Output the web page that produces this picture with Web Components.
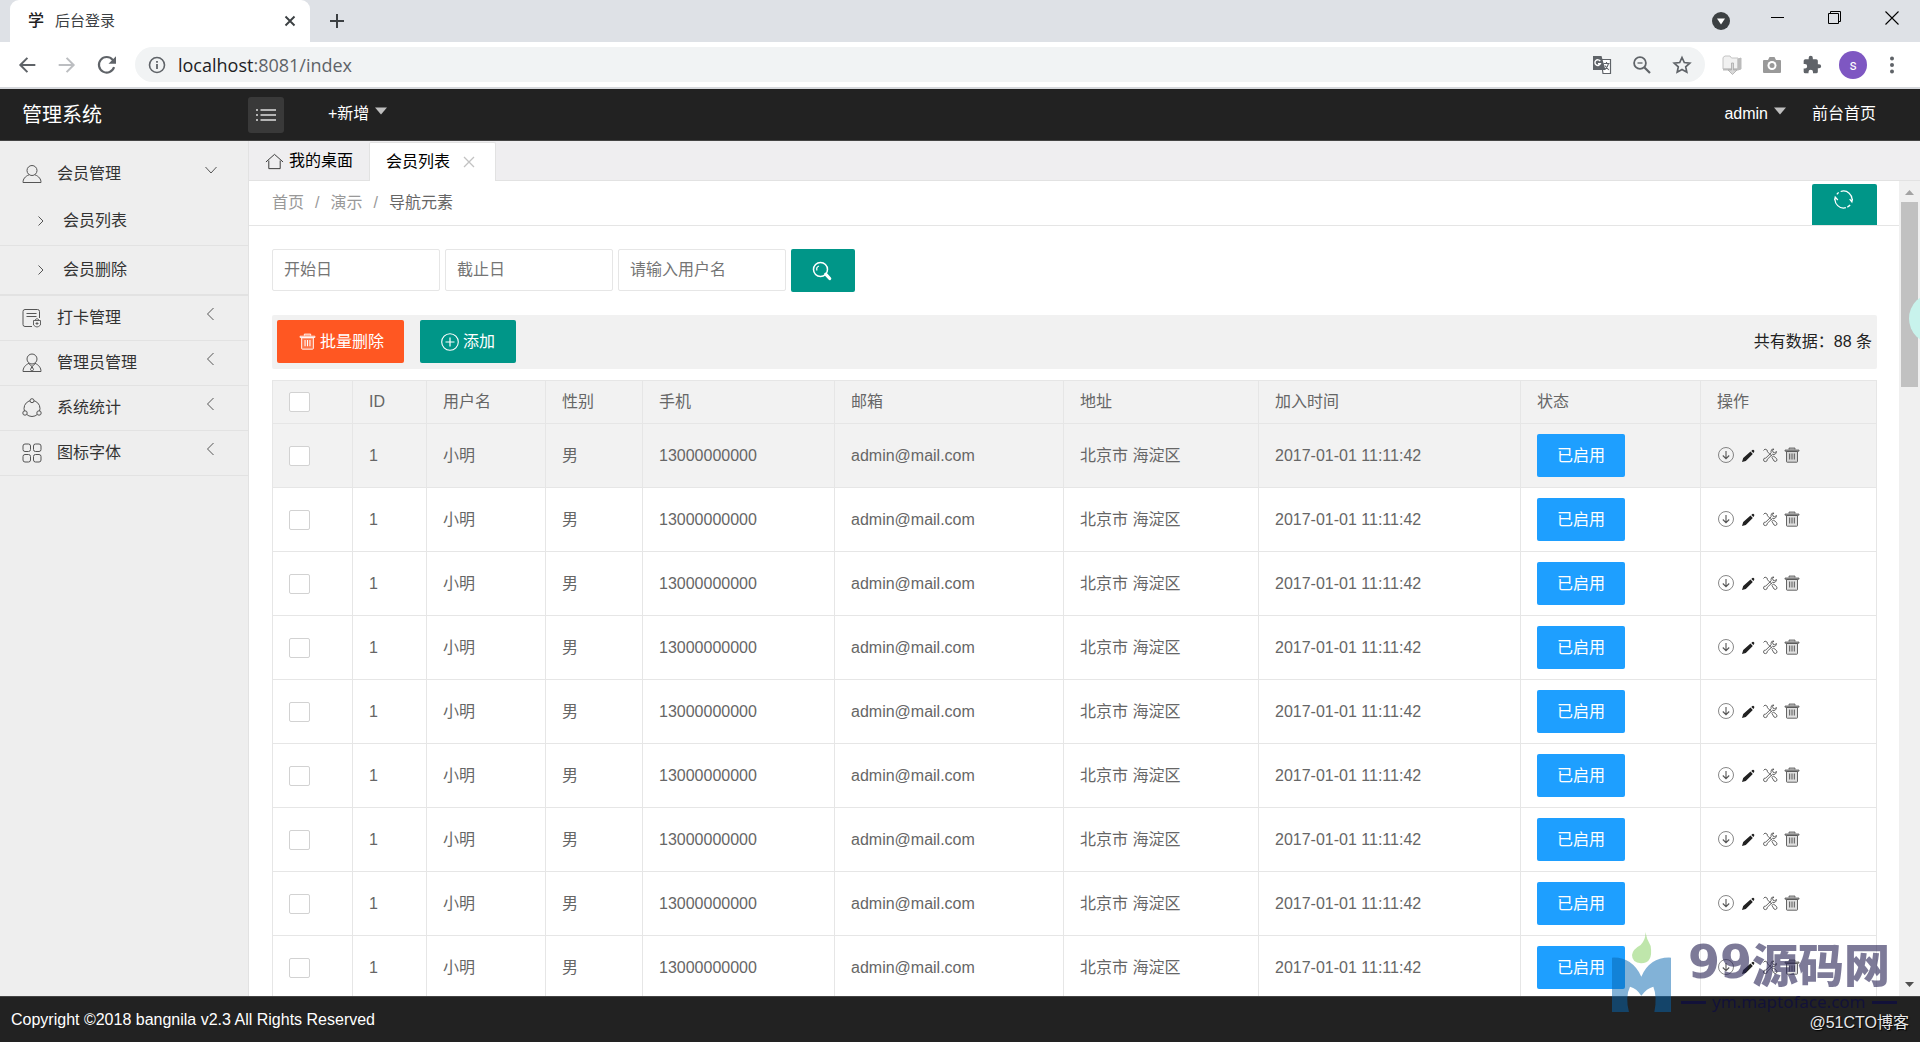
<!DOCTYPE html>
<html lang="zh-CN">
<head>
<meta charset="utf-8">
<title>后台登录</title>
<style>
  html, body { margin: 0; height: 100%; }
  body {
    font: 16px/24px "Liberation Sans", "Noto Sans CJK SC", sans-serif;
    color: #333; background: #fff; overflow: hidden;
  }
</style>
</head>
<body>
<admin-app></admin-app>

<script>
const ICONS = {
  back: ['0 0 24 24', '<path d="M22 12H4M12.500 3.500L4 12l8.500 8.500" stroke-width="2.400"/>'],
  forward: ['0 0 24 24', '<path d="M2 12h18M11.500 3.500L20 12l-8.500 8.500" stroke-width="2.400"/>'],
  reload: ['0 0 24 24', '<path d="M20.500 14.500A9.300 9.300 0 1 1 18.800 5.800L21 8" stroke-width="2.600"/><path d="M22.800 1.500v9h-9z" fill="currentColor" stroke="none"/>'],
  info: ['0 0 18 18', '<circle cx="9" cy="9" r="7.500" stroke-width="1.600"/><path d="M9 8v5M9 5v1.800" stroke-width="1.800"/>'],
  close: ['0 0 12 12', '<path d="M1.500 1.500l9 9M10.500 1.500l-9 9" stroke-width="1.900"/>'],
  plus: ['0 0 16 16', '<path d="M8 1v14M1 8h14" stroke-width="2"/>'],
  tabsearch: ['0 0 18 18', '<circle cx="9" cy="9" r="9" fill="currentColor" stroke="none"/><path d="M5 6.500h8L9 12.500z" fill="#fff" stroke="none"/>'],
  minimize: ['0 0 14 14', '<path d="M0 6.500h13" stroke-width="1"/>'],
  restore: ['0 0 14 14', '<path d="M.5 2.500h10v10H.5zM2.500 2.500v-2h10v10h-2" stroke-width="1"/>'],
  winclose: ['0 0 14 14', '<path d="M.5.5l13 13M13.500.5l-13 13" stroke-width="1.100"/>'],
  translate: ['0 0 20 20', '<path d="M9 4.500h9.500v14H11z" fill="#fff" stroke-width="1.200"/><path d="M1 1h8.500l4 14H1z" fill="currentColor" stroke="none"/><path d="M8.200 6.200A2.800 2.800 0 1 0 8.400 8.600H6" stroke="#fff" stroke-width="1.400"/><path d="M11.500 8.500h6M14.500 7v1.500M16.500 8.700c-.6 3-2 4.500-4 6M12.800 10.500l4 4.500" stroke-width="1.100"/>'],
  zoomout: ['0 0 18 18', '<circle cx="7" cy="7" r="5.900" stroke-width="1.800"/><path d="M11.500 11.500l5.500 5.500" stroke-width="2.200"/><path d="M4.500 7h5" stroke-width="1.300"/>'],
  star: ['0 0 20 20', '<path d="M10 2.500l2.300 5 5.500.6-4.100 3.700 1.100 5.400L10 14.500l-4.800 2.700 1.100-5.400L2.200 8.100l5.500-.6z" stroke-width="1.700"/>'],
  folder: ['0 0 20 20', '<path d="M1 2.500l2-1.500h5l1.500 2H16v11H1z" fill="#f1f1f1" stroke="#c4c4c4"/><path d="M16 4l3-1v11l-3 1z" fill="#bbb" stroke="#bbb"/><path d="M1 14.500h15" stroke="#bbb" stroke-width="2"/><path d="M9.500 8h2v7H15l-4.500 4.500L6 15h3.500z" fill="#d8d8d8" stroke="#aaa" stroke-width=".8"/>'],
  camera: ['0 0 18 18', '<path d="M1 4h4l1.500-3h5L13 4h4q1 0 1 1v11q0 1-1 1H1q-1 0-1-1V5q0-1 1-1z" fill="#999" stroke="none"/><circle cx="9" cy="9.500" r="4.500" fill="#fff" stroke="none"/><circle cx="9" cy="9.500" r="2.500" fill="#999" stroke="none"/>'],
  puzzle: ['0 0 24 24', '<path d="M20.500 11H19V7a2 2 0 0 0-2-2h-4V3.500a2.500 2.500 0 0 0-5 0V5H4a2 2 0 0 0-2 2v3.800h1.500a2.700 2.700 0 0 1 0 5.400H2V20a2 2 0 0 0 2 2h3.800v-1.500a2.700 2.700 0 0 1 5.400 0V22H17a2 2 0 0 0 2-2v-4h1.500a2.500 2.500 0 0 0 0-5z" fill="currentColor" stroke="none"/>'],
  dots: ['0 0 18 18', '<g fill="currentColor" stroke="none"><circle cx="9" cy="2.500" r="2"/><circle cx="9" cy="9" r="2"/><circle cx="9" cy="15.500" r="2"/></g>'],
  list: ['0 0 20 14', '<path d="M4.500 2H20M4.500 7H20M4.500 12H20M0 2h2M0 7h2M0 12h2" stroke-width="1.300"/>'],
  caret: ['0 0 12 7', '<path d="M0 0h12L6 7z" fill="currentColor" stroke="none"/>'],
  home: ['0 0 20 18', '<path d="M1 9.500L10 1.500l9 8M4 8v8.500h12V8"/>'],
  thinclose: ['0 0 12 12', '<path d="M1 1l10 10M11 1L1 11" stroke-width="1.300"/>'],
  user: ['0 0 20 20', '<circle cx="10" cy="6.500" r="5"/><path d="M7 10.800C3 12.500 1 15 1 18.500h18c0-3.500-2-6-6-7.700"/>'],
  admin: ['0 0 20 20', '<circle cx="10" cy="6" r="5"/><path d="M7 10.300C3 12 1 15 1 18.500h18c0-3.500-2-6.500-6-8.200M7 10.800l3 2.700 3-2.700M10 13.500l-1.500 3 1.500 2 1.500-2z"/>'],
  card: ['0 0 20 20', '<path d="M10 18.500H3q-2 0-2-2v-13q0-2 2-2h12.500q2 0 2 2V10M4.500 5.500h10M4.500 8.500h10"/><path d="M11.500 12.500h7v4.500q-2 2-3.500 2t-3.500-2zM13 12q2-3 4 0M15 14v3M13.500 15.500h3" stroke-width=".9"/>'],
  nodes: ['0 0 20 20', '<circle cx="10" cy="10.500" r="8"/><g fill="#eee"><circle cx="10" cy="2.700" r="2"/><circle cx="3" cy="15" r="2.200"/><circle cx="17" cy="15" r="2.200"/></g>'],
  grid: ['0 0 20 20', '<rect x="1" y="1" width="7.500" height="7.500" rx="2"/><rect x="11.500" y="1" width="7.500" height="7.500" rx="2"/><rect x="1" y="11.500" width="7.500" height="7.500" rx="2"/><rect x="11.500" y="11.500" width="7.500" height="7.500" rx="2"/>'],
  down: ['0 0 14 14', '<path d="M1.500 4L7 10l5.500-6"/>'],
  left: ['0 0 14 14', '<path d="M9.500 1L3.500 7l6 6"/>'],
  right: ['0 0 14 14', '<path d="M4.500 2.500L9 7l-4.500 4.500"/>'],
  refresh: ['0 0 20 20', '<path d="M7 1.600A9 9 0 0 1 18.800 12M16.500 9.500l2.300 3 .8-3.500M17 15.800A9 9 0 0 1 14 18M12.500 18.600A9 9 0 0 1 1.300 8M.5 11l.8-3.500 2.700 3M3 4.500a9 9 0 0 1 2-1.800" stroke-width="1.300"/>'],
  search: ['0 0 20 20', '<circle cx="8.500" cy="8.500" r="7" stroke-width="1.500"/><path d="M5 9.500a3.500 3.500 0 0 1 2-4.500" stroke-width="1.200"/><path d="M13.700 13.200l4 4.300" stroke-width="3.200" stroke-linecap="round"/>'],
  trash: ['0 0 16 16', '<path d="M1 3h14v1.200H1zM5 2.500V1h6v1.500" fill="currentColor" fill-opacity=".4" stroke-width=".8"/><path d="M2.500 4.500v10q0 .7.700.7h9.600q.7 0 .7-.7v-10z" fill="currentColor" fill-opacity=".18" stroke-width=".9"/><path d="M5.700 6.500v6M8 6.500v6M10.300 6.500v6" stroke-width="1"/>'],
  add: ['0 0 18 18', '<circle cx="9" cy="9" r="8.300" stroke-width="1.100"/><path d="M9 4.500v9M4.500 9h9" stroke-width="1.200"/>'],
  circledown: ['0 0 16 16', '<circle cx="8" cy="8" r="7.500" stroke-width=".7"/><path d="M8 4v7.500M4.800 8.500L8 11.700l3.200-3.200" stroke-width="1.100"/>'],
  pencil: ['0 0 16 16', '<path d="M2 15l1.200-4L10.500 4.600l2.300 2.300-7 7zM11.300 3.900l1-.9q1-.6 1.700.2t.1 1.800l-.7 1z" fill="#222" stroke="none"/>'],
  tools: ['0 0 16 16', '<path d="M1.500 3.500L3 2l2.200 1.200.3 1.600 4.500 4.500M10 10.500l1.500-1.500 3 2.500q1 1.500 0 2.500t-2.500 0z" stroke-width=".9"/><path d="M14.500 4.500L12.700 5.700 11 5.200l-.4-1.700L12 2Q9.200 1.600 9 4.200q0 1 .2 1.600L3.800 11Q1.500 10.800 1.500 13q.3 1.800 2 1.600 2-.2 1.800-2.300l5.200-5q3.500 1 4-2.800z" stroke-width=".9"/>'],
};

const make = (host, html) => { host.attachShadow({ mode: 'open' }).innerHTML = html; };

class UiIcon extends HTMLElement {
  connectedCallback() {
    if (this.shadowRoot) return;
    const [box, body] = ICONS[this.getAttribute('name')];
    make(this, `<style>
      :host { display: inline-flex; flex: none; width: var(--icon-size, 16px); height: var(--icon-size, 16px); }
      svg { width: 100%; height: 100%; display: block; }
    </style><svg viewBox="${box}" fill="none" stroke="currentColor" aria-hidden="true">${body}</svg>`);
    const size = this.getAttribute('size');
    if (size) this.style.setProperty('--icon-size', size + 'px');
  }
}

class BrowserBar extends HTMLElement {
  connectedCallback() {
    make(this, `<style>
      :host { display: block; flex: none; border-bottom: 2px solid #d6d8dc; color: #5f6368; background: #fff; }
      button { border: 0; padding: 0; background: none; color: inherit; font: inherit; display: inline-flex; align-items: center; justify-content: center; flex: none; }
      .strip { height: 42px; background: #dee1e6; display: flex; padding-left: 10px; color: #3c4043; }
      .tab { width: 300px; box-sizing: border-box; padding: 0 14px 0 18px; background: #fff; border-radius: 9px 9px 0 0; display: flex; align-items: center; gap: 11px; font-size: 15px; }
      .fav { font-weight: 500; font-size: 16px; color: #222; }
      .name { flex: 1; }
      .new { width: 54px; }
      .win { margin-left: auto; display: flex; color: #000; height: 36px; }
      .win button { width: 57px; }
      .win button:first-child { color: #3c4043; padding-top: 6px; }
      .bar { height: 45px; display: flex; align-items: center; box-sizing: border-box; padding: 0 9px 0 7px; }
      .nav { width: 40px; height: 35px; }
      .nav.off { color: #bcbec1; }
      .menu { width: 38px; }
      .url { flex: 1; height: 35px; margin: 0 7px 0 8px; padding: 0 3px 0 13px; background: #f1f3f4; border-radius: 18px; display: flex; align-items: center; }
      .address { flex: 1; padding-left: 12px; font: 18px/24px "Open Sans", "Noto Sans", sans-serif; }
      b { font-weight: 400; color: #202124; }
      .avatar { width: 28px; height: 28px; margin: 0 6px 0 7px; border-radius: 50%; background: #7e57c2; color: #fff; font: 14px/28px Roboto, sans-serif; }
    </style>
    <div class="strip">
      <div class="tab"><span class="fav">学</span><span class="name">后台登录</span><button aria-label="关闭标签页"><ui-icon name="close" size="12"></ui-icon></button></div>
      <button class="new" aria-label="新标签页"><ui-icon name="plus" size="16"></ui-icon></button>
      <div class="win">
        <button aria-label="搜索标签页"><ui-icon name="tabsearch" size="18"></ui-icon></button>
        <button aria-label="最小化"><ui-icon name="minimize" size="14"></ui-icon></button>
        <button aria-label="还原"><ui-icon name="restore" size="14"></ui-icon></button>
        <button aria-label="关闭"><ui-icon name="winclose" size="14"></ui-icon></button>
      </div>
    </div>
    <div class="bar">
      <button class="nav" aria-label="后退"><ui-icon name="back" size="20"></ui-icon></button>
      <button class="nav off" aria-label="前进"><ui-icon name="forward" size="20"></ui-icon></button>
      <button class="nav" aria-label="重新加载"><ui-icon name="reload" size="20"></ui-icon></button>
      <div class="url">
        <ui-icon name="info" size="18"></ui-icon>
        <span class="address"><b>localhost</b>:8081/index</span>
        <button class="nav" aria-label="翻译"><ui-icon name="translate" size="20"></ui-icon></button>
        <button class="nav" aria-label="缩放"><ui-icon name="zoomout" size="18"></ui-icon></button>
        <button class="nav" aria-label="收藏"><ui-icon name="star" size="20"></ui-icon></button>
      </div>
      <button class="nav" aria-label="下载"><ui-icon name="folder" size="20"></ui-icon></button>
      <button class="nav" aria-label="截图"><ui-icon name="camera" size="18"></ui-icon></button>
      <button class="nav" aria-label="扩展程序"><ui-icon name="puzzle" size="20"></ui-icon></button>
      <button class="avatar">s</button>
      <button class="nav menu" aria-label="菜单"><ui-icon name="dots" size="18"></ui-icon></button>
    </div>`);
  }
}

class AppHeader extends HTMLElement {
  connectedCallback() {
    make(this, `<style>
      :host { display: flex; flex: none; align-items: center; height: 51px; background: #222; border-bottom: 1px solid #444; padding: 0 44px 0 22px; color: #fff; }
      a { color: #fff; text-decoration: none; }
      .logo { width: 226px; font-size: 20px; }
      .toggle { width: 36px; height: 36px; border: 0; border-radius: 3px; padding: 0; background: #393939; color: #ddd; display: flex; align-items: center; justify-content: center; }
      .add { margin-left: 44px; }
      .menu { display: flex; align-items: center; gap: 6px; }
      .menu ui-icon { color: #bfbfbf; padding-bottom: 6px; }
      .right { margin-left: auto; display: flex; gap: 26px; }
      .menu, .right { padding-bottom: 1px; }
      .right .menu { padding-bottom: 0; }
    </style>
    <a class="logo" href="#">管理系统</a>
    <button class="toggle" aria-label="收起菜单"><ui-icon name="list" size="20"></ui-icon></button>
    <a class="menu add" href="#">+新增<ui-icon name="caret" size="12"></ui-icon></a>
    <nav class="right"><a class="menu" href="#">admin<ui-icon name="caret" size="12"></ui-icon></a><a href="#">前台首页</a></nav>`);
  }
}

class NavItem extends HTMLElement {
  connectedCallback() {
    const sub = this.hasAttribute('sub'), open = this.hasAttribute('open');
    make(this, `<style>
      :host { display: block; }
      a { display: flex; align-items: center; box-sizing: border-box; height: 45px; padding: 0 30px 0 22px; color: #333; text-decoration: none; border-bottom: 1px solid #e2e2e2; }
      a.open { border-color: transparent; }
      a.sub { height: 49px; padding-left: 34px; }
      .text { flex: 1; margin-left: 15px; }
      ui-icon { color: #555; }
      .arrow { padding-bottom: 8px; }
    </style>
    <a href="#" class="${sub ? 'sub' : ''} ${open ? 'open' : ''}">
      <ui-icon name="${sub ? 'right' : this.getAttribute('icon')}" size="${sub ? 14 : 20}"></ui-icon>
      <span class="text"><slot></slot></span>
      ${sub ? '' : `<ui-icon class="arrow" name="${open ? 'down' : 'left'}" size="14"></ui-icon>`}
    </a>`);
  }
}

class SideNav extends HTMLElement {
  connectedCallback() {
    make(this, `<style>
      :host { display: block; flex: none; box-sizing: border-box; width: 249px; padding-top: 11px; background: #eee; border-right: 1px solid #e2e2e2; }
      .group { border-bottom: 1px solid #e2e2e2; }
    </style>
    <nav>
      <nav-item icon="user" open>会员管理</nav-item>
      <div class="group"><nav-item sub>会员列表</nav-item><nav-item sub>会员删除</nav-item></div>
      <nav-item icon="card">打卡管理</nav-item>
      <nav-item icon="admin">管理员管理</nav-item>
      <nav-item icon="nodes">系统统计</nav-item>
      <nav-item icon="grid">图标字体</nav-item>
    </nav>`);
  }
}

class PageTabs extends HTMLElement {
  connectedCallback() {
    make(this, `<style>
      :host { display: flex; flex: none; box-sizing: border-box; height: 40px; background: #efeef0; box-shadow: inset 0 -1px #e2e2e2; color: #000; }
      .tab { display: flex; align-items: center; box-sizing: border-box; padding: 0 16px; }
      .home { margin-right: 5px; color: #333; }
      .active { margin-top: 1px; background: #fff; border: 1px solid #e2e2e2; border-bottom: 0; border-radius: 2px 2px 0 0; padding-right: 20px; }
      button { border: 0; background: none; padding: 0; margin-left: 13px; display: flex; color: #c2c2c2; }
    </style>
    <div class="tab"><ui-icon class="home" name="home" size="19"></ui-icon>我的桌面</div>
    <div class="tab active">会员列表<button aria-label="关闭"><ui-icon name="thinclose" size="12"></ui-icon></button></div>`);
  }
}

class CrumbBar extends HTMLElement {
  connectedCallback() {
    make(this, `<style>
      :host { display: flex; flex: none; box-sizing: border-box; height: 45px; padding: 0 22px 0 23px; border-bottom: 1px solid #e5e5e5; align-items: center; color: #999; }
      nav { flex: 1; display: flex; gap: 11px; }
      a { color: #999; text-decoration: none; }
      a.here { color: #666; }
      button { align-self: flex-end; width: 65px; height: 41px; box-sizing: border-box; border: 0; border-radius: 2px 2px 0 0; padding: 0 3px 10px 0; background: #009688; color: #fff; display: flex; justify-content: center; align-items: center; }
    </style>
    <nav><a href="#">首页</a><span>/</span><a href="#">演示</a><span>/</span><a class="here" href="#">导航元素</a></nav>
    <button aria-label="刷新"><ui-icon name="refresh" size="19"></ui-icon></button>`);
  }
}

class SearchForm extends HTMLElement {
  connectedCallback() {
    make(this, `<style>
      :host { display: block; }
      form { display: flex; gap: 5px; }
      input { box-sizing: border-box; width: 168px; height: 42px; border: 1px solid #e6e6e6; border-radius: 2px; padding: 0 11px; font: inherit; color: #333; background: #fff; }
      input::placeholder { color: #757575; }
      button { width: 64px; height: 43px; border: 0; border-radius: 2px; padding: 0 3px 0 0; background: #009688; color: #fff; display: flex; align-items: center; justify-content: center; }
    </style>
    <form>
      <input aria-label="开始日" placeholder="开始日">
      <input aria-label="截止日" placeholder="截止日">
      <input aria-label="用户名" placeholder="请输入用户名">
      <button type="button" aria-label="搜索"><ui-icon name="search" size="20"></ui-icon></button>
    </form>`);
  }
}

class ActionBar extends HTMLElement {
  connectedCallback() {
    make(this, `<style>
      :host { display: flex; align-items: center; gap: 16px; margin: 23px 0 11px; height: 54px; padding: 0 5px 1px; background: #f1f1f1; border-radius: 2px; box-sizing: border-box; color: #222; }
      button { height: 43px; border: 0; border-radius: 2px; padding: 0 20px 0 22px; font: inherit; color: #fff; display: flex; align-items: center; gap: 4px; }
      .danger { background: #ff5722; }
      .add { background: #009688; padding: 0 21px; }
      .total { margin-left: auto; }
    </style>
    <button class="danger"><ui-icon name="trash" size="17"></ui-icon>批量删除</button>
    <button class="add"><ui-icon name="add" size="18"></ui-icon>添加</button>
    <span class="total">共有数据：88 条</span>`);
  }
}

class MemberTable extends HTMLElement {
  connectedCallback() {
    const heads = ['ID', '用户名', '性别', '手机', '邮箱', '地址', '加入时间', '状态', '操作'];
    const widths = [80, 74, 119, 97, 192, 229, 195, 262, 180, 176];
    const cells = ['1', '小明', '男', '13000000000', 'admin@mail.com', '北京市 海淀区', '2017-01-01 11:11:42'];
    const ops = [['circledown', '停用'], ['pencil', '编辑'], ['tools', '修改密码'], ['trash', '删除']];
    const row = `<tr><td><input type="checkbox" aria-label="选择"></td>${cells.map(c => `<td>${c}</td>`).join('')}
      <td><button class="state">已启用</button></td>
      <td><div class="ops">${ops.map(([i, t]) => `<a href="#" aria-label="${t}"><ui-icon name="${i}" size="16"></ui-icon></a>`).join('')}</div></td></tr>`;
    make(this, `<style>
      :host { display: block; }
      table { width: 100%; table-layout: fixed; border-collapse: collapse; color: #666; }
      th, td { border: 1px solid #e6e6e6; padding: 0 16px; text-align: left; font-weight: 400; box-sizing: border-box; white-space: nowrap; }
      th { height: 43px; }
      td { height: 64px; }
      thead, tbody tr:first-child { background: #f2f2f2; }
      input { appearance: none; display: block; box-sizing: border-box; width: 21px; height: 20px; margin: 0; border: 1px solid #d2d2d2; border-radius: 2px; background: #fff; }
      .state { display: block; height: 43px; padding: 0 20px; border: 0; border-radius: 2px; background: #1e9fff; color: #fff; font: inherit; }
      .ops { display: flex; gap: 6px; padding: 0 0 2px 1px; }
      .ops a { color: #555; display: flex; }
    </style>
    <table>
      <colgroup>${widths.map(w => `<col style="width:${w}px">`).join('')}</colgroup>
      <thead><tr><th><input type="checkbox" aria-label="全选"></th>${heads.map(h => `<th>${h}</th>`).join('')}</tr></thead>
      <tbody>${row.repeat(9)}</tbody>
    </table>`);
  }
}

class ScrollTrack extends HTMLElement {
  connectedCallback() {
    make(this, `<style>
      :host { display: flex; flex: none; flex-direction: column; align-items: center; width: 21px; box-sizing: border-box; background: #f0f0f0; padding: 7px 0; }
      .thumb { width: 17px; height: 185px; background: #c1c1c1; margin-top: 5px; }
      svg { width: 9px; height: 9px; flex: none; }
      .end { margin-top: auto; }
    </style>
    <svg viewBox="0 0 9 9"><path d="M0 7l4.500-5L9 7z" fill="#a3a3a3"/></svg>
    <div class="thumb"></div>
    <svg class="end" viewBox="0 0 9 9"><path d="M0 2l4.500 5L9 2z" fill="#505050"/></svg>`);
  }
}

class SiteMark extends HTMLElement {
  connectedCallback() {
    make(this, `<style>
      :host { position: fixed; right: 23px; bottom: 28px; display: flex; gap: 10px; align-items: flex-end; pointer-events: none; }
      svg { width: 59px; height: 80px; margin-bottom: 2px; }
      .words { width: 216px; text-align: center; }
      .title { font: 900 46px/56px "Noto Sans CJK SC", sans-serif; color: rgba(38, 34, 84, .6); display: flex; justify-content: center; align-items: center; }
      .nines { font: 700 46px/56px "DejaVu Sans", sans-serif; }
      .site { display: flex; align-items: center; justify-content: space-between; font: 17px/24px "Noto Sans", sans-serif; color: rgba(14, 12, 66, .75); }
      i { width: 25px; height: 3px; background: currentColor; }
    </style>
    <svg viewBox="336 156 177 240"><path fill="rgba(5,102,175,.5)" d="M336 233Q396 230 424 290Q450 230 513 233V396H463Q472 350 460 320Q440 325 424 347Q410 325 390 320Q375 350 387 396H336Z"/><path fill="rgba(127,206,88,.5)" d="M436 156Q440 178 452 198Q460 250 423 250Q396 248 396 225Q398 208 422 195Q438 178 436 156Z"/></svg>
    <div class="words">
      <div class="title"><span class="nines">99</span><span>源码网</span></div>
      <div class="site"><i></i><span>ym.maptoface.com</span><i></i></div>
    </div>`);
  }
}

class AppFooter extends HTMLElement {
  connectedCallback() {
    make(this, `<style>
      :host { display: flex; flex: none; box-sizing: border-box; height: 46px; border-top: 1px solid #444; background: #222; color: #fff; padding: 11px 11px 0; justify-content: space-between; }
      .by { padding-top: 3px; text-shadow: 1px 1px 1px #000; color: #e8e8e8; }
    </style>
    <span>Copyright ©2018 bangnila v2.3 All Rights Reserved</span><span class="by">@51CTO博客</span>`);
  }
}

class AdminApp extends HTMLElement {
  connectedCallback() {
    make(this, `<style>
      :host { display: flex; flex-direction: column; height: 100vh; }
      .body { flex: 1; min-height: 0; display: flex; }
      main { flex: 1; min-width: 0; display: flex; flex-direction: column; }
      .frame { flex: 1; min-height: 0; display: flex; }
      .page { flex: 1; min-width: 0; overflow: hidden; }
      .content { padding: 23px 22px 0 23px; }
      .float { position: fixed; right: -40px; top: 293px; width: 51px; height: 51px; border-radius: 50%; background: #c8f3ec; }
    </style>
    <browser-bar></browser-bar>
    <app-header></app-header>
    <div class="body">
      <side-nav></side-nav>
      <main>
        <page-tabs></page-tabs>
        <div class="frame">
          <div class="page">
            <crumb-bar></crumb-bar>
            <div class="content">
              <search-form></search-form>
              <action-bar></action-bar>
              <member-table></member-table>
            </div>
          </div>
          <scroll-track></scroll-track>
        </div>
      </main>
    </div>
    <app-footer></app-footer>
    <div class="float"></div>
    <site-mark></site-mark>`);
  }
}

customElements.define('ui-icon', UiIcon);
customElements.define('browser-bar', BrowserBar);
customElements.define('app-header', AppHeader);
customElements.define('nav-item', NavItem);
customElements.define('side-nav', SideNav);
customElements.define('page-tabs', PageTabs);
customElements.define('crumb-bar', CrumbBar);
customElements.define('search-form', SearchForm);
customElements.define('action-bar', ActionBar);
customElements.define('member-table', MemberTable);
customElements.define('scroll-track', ScrollTrack);
customElements.define('site-mark', SiteMark);
customElements.define('app-footer', AppFooter);
customElements.define('admin-app', AdminApp);
</script>
</body>
</html>
